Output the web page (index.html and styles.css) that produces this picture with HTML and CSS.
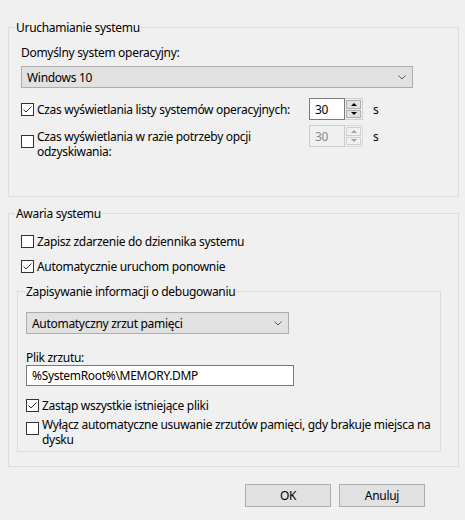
FILE: index.html
```html
<!DOCTYPE html>
<html lang="pl">
<head>
    <meta charset="UTF-8">
    <title>Uruchamianie i odzyskiwanie</title>
    <link rel="stylesheet" href="styles.css">
</head>
<body>

<div class="dialog">
    <fieldset class="group startup">
        <legend>Uruchamianie systemu</legend>
        <div class="group-body">
            <div class="label">Domyślny system operacyjny:</div>
            <div class="combo os-combo">
                <span>Windows 10</span>
                <svg class="chevron" width="8" height="5" viewBox="0 0 8 5"><path d="M0.5 0.5 L4 4 L7.5 0.5" fill="none" stroke="#555" stroke-width="1"/></svg>
            </div>

            <div class="timeout-row first">
                <span class="check on"><svg width="11" height="11" viewBox="0 0 11 11"><path d="M1.5 5.5 L4 8 L9.5 2.5" fill="none" stroke="#333" stroke-width="1"/></svg></span>
                <span class="text">Czas wyświetlania listy systemów operacyjnych:</span>
                <div class="spin">
                    <span class="spin-field">30</span>
                    <span class="spin-btns">
                        <span class="spin-btn"><i class="arrow up"></i></span>
                        <span class="spin-btn"><i class="arrow down"></i></span>
                    </span>
                </div>
                <span class="unit">s</span>
            </div>

            <div class="timeout-row second">
                <span class="check"></span>
                <span class="text">Czas wyświetlania w razie potrzeby opcji<br>odzyskiwania:</span>
                <div class="spin disabled">
                    <span class="spin-field">30</span>
                    <span class="spin-btns">
                        <span class="spin-btn"><i class="arrow up"></i></span>
                        <span class="spin-btn"><i class="arrow down"></i></span>
                    </span>
                </div>
                <span class="unit">s</span>
            </div>
        </div>
    </fieldset>

    <fieldset class="group failure">
        <legend>Awaria systemu</legend>
        <div class="group-body">
            <div class="option log-row">
                <span class="check"></span>
                <span>Zapisz zdarzenie do dziennika systemu</span>
            </div>
            <div class="option restart-row">
                <span class="check on"><svg width="11" height="11" viewBox="0 0 11 11"><path d="M1.5 5.5 L4 8 L9.5 2.5" fill="none" stroke="#333" stroke-width="1"/></svg></span>
                <span>Automatycznie uruchom ponownie</span>
            </div>

            <fieldset class="group debug">
                <legend>Zapisywanie informacji o debugowaniu</legend>
                <div class="group-body">
                    <div class="combo dump-combo">
                        <span>Automatyczny zrzut pamięci</span>
                        <svg class="chevron" width="8" height="5" viewBox="0 0 8 5"><path d="M0.5 0.5 L4 4 L7.5 0.5" fill="none" stroke="#555" stroke-width="1"/></svg>
                    </div>
                    <div class="label dump-label">Plik zrzutu:</div>
                    <div class="textbox">%SystemRoot%\MEMORY.DMP</div>
                    <div class="option overwrite-row">
                        <span class="check on"><svg width="11" height="11" viewBox="0 0 11 11"><path d="M1.5 5.5 L4 8 L9.5 2.5" fill="none" stroke="#333" stroke-width="1"/></svg></span>
                        <span>Zastąp wszystkie istniejące pliki</span>
                    </div>
                    <div class="option multi autodelete-row">
                        <span class="check"></span>
                        <span class="text">Wyłącz automatyczne usuwanie zrzutów pamięci, gdy brakuje miejsca na<br>dysku</span>
                    </div>
                </div>
            </fieldset>
        </div>
    </fieldset>

    <div class="buttons">
        <button class="btn">OK</button>
        <button class="btn">Anuluj</button>
    </div>
</div>

</body>
</html>
```

FILE: styles.css
```css
html, body {
    margin: 0;
    background: #f0f0f0;
}
body {
    font-family: "Segoe UI", "Noto Sans", sans-serif;
    font-size: 12px;
    line-height: 15px;
    letter-spacing: -0.3px;
    color: #000;
}
.dialog {
    width: 451px;
    padding: 20px 6px 0 8px;
}

/* group boxes */
.group {
    margin: 0;
    padding: 0;
    border: 1px solid #dcdcdc;
    min-width: 0;
}
.group legend {
    margin-left: 6px;
    padding: 0 1px;
    line-height: 15px;
}
.startup .group-body {
    padding: 10px 12px 37px 12px;
}
.failure {
    margin-top: 9px;
}
.failure .group-body {
    padding: 13px 17px 14px 8px;
}
.debug {
    margin-top: 10px;
}
.debug legend {
    margin-left: 7px;
}
.debug .group-body {
    padding: 13px 8px 4px 8px;
}

.label {
    line-height: 15px;
}
.text {
    white-space: nowrap;
}

/* drop-down lists */
.combo {
    box-sizing: border-box;
    height: 22px;
    margin-top: 6px;
    display: flex;
    align-items: center;
    justify-content: space-between;
    padding: 0 6px 0 5px;
    background: #e1e1e1;
    border: 1px solid #adadad;
}
.os-combo {
    width: 392px;
}
.dump-combo {
    width: 263px;
    margin-top: 0;
}

/* checkboxes */
.check {
    box-sizing: border-box;
    width: 13px;
    height: 13px;
    border: 1px solid #333;
    background: #fff;
    display: flex;
    align-items: center;
    justify-content: center;
    flex-shrink: 0;
}

/* timeout rows with spinners */
.timeout-row {
    display: grid;
    grid-template-columns: 16px 272px 54px auto;
    align-items: start;
}
.timeout-row.first {
    margin-top: 10px;
    align-items: center;
}
.timeout-row.second {
    margin-top: 5px;
}
.timeout-row.second .check {
    margin-top: 10px;
}
.timeout-row.second .text {
    margin-top: 4px;
}
.spin {
    display: flex;
    height: 22px;
}
.spin-field {
    box-sizing: border-box;
    width: 36px;
    height: 22px;
    padding: 3px 0 0 5px;
    background: #fff;
    border: 1px solid #7a7a7a;
}
.spin-btns {
    box-sizing: border-box;
    width: 18px;
    height: 22px;
    display: flex;
    flex-direction: column;
    gap: 1px;
    padding: 1px;
    border: 1px solid #cfcfcf;
    border-left: none;
    background: #f0f0f0;
}
.spin-btn {
    flex: 1;
    display: flex;
    align-items: center;
    justify-content: center;
    background: #e1e1e1;
    border: 1px solid #adadad;
}
.arrow {
    width: 0;
    height: 0;
    border-left: 3px solid transparent;
    border-right: 3px solid transparent;
}
.arrow.up {
    border-bottom: 3px solid #000;
}
.arrow.down {
    border-top: 3px solid #000;
}
.spin.disabled .spin-field {
    background: #f0f0f0;
    border-color: #cccccc;
    color: #8a8a8a;
}
.spin.disabled .spin-btns {
    border-color: #dadada;
}
.spin.disabled .spin-btn {
    background: #f0f0f0;
    border-color: #d0d0d0;
}
.spin.disabled .arrow.up {
    border-bottom-color: #a0a0a0;
}
.spin.disabled .arrow.down {
    border-top-color: #a0a0a0;
}
.unit {
    margin-left: 10px;
}
.timeout-row.second .unit {
    margin-top: 4px;
}

/* plain checkbox options */
.option {
    display: flex;
    align-items: center;
    gap: 3px;
    line-height: 15px;
}
.log-row,
.restart-row {
    margin-left: 4px;
}
.restart-row {
    margin-top: 10px;
}
.overwrite-row {
    margin-top: 12px;
}
.option.multi {
    align-items: start;
    margin-top: 4px;
}
.option.multi .check {
    margin-top: 5px;
}

/* dump file path */
.dump-label {
    margin-top: 17px;
    line-height: 14px;
}
.textbox {
    box-sizing: border-box;
    width: 268px;
    height: 21px;
    padding: 2px 5px 0;
    background: #fff;
    border: 1px solid #7a7a7a;
}

/* dialog buttons */
.buttons {
    display: flex;
    justify-content: flex-end;
    gap: 8px;
    margin-top: 17px;
    padding-right: 34px;
}
.btn {
    box-sizing: border-box;
    width: 86px;
    height: 23px;
    padding: 0;
    font: inherit;
    letter-spacing: inherit;
    color: #000;
    background: #e1e1e1;
    border: 1px solid #adadad;
}
```
